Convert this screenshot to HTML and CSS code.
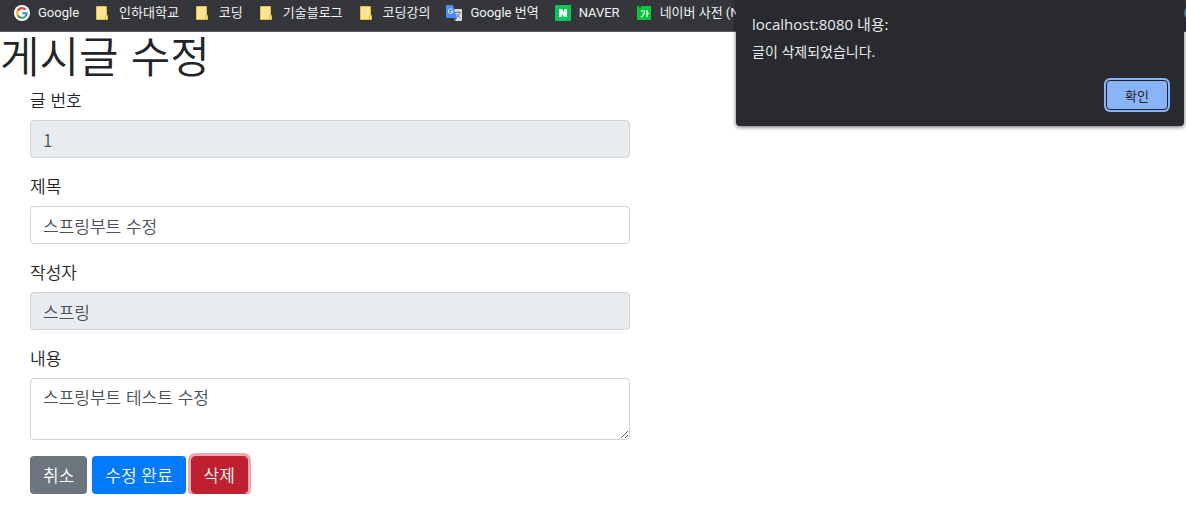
FILE: index.html
```html
<!DOCTYPE html>
<html lang="ko">
<head>
    <meta charset="UTF-8">
    <meta name="viewport" content="width=device-width, initial-scale=1.0">
    <title>게시글 수정</title>
    <link rel="stylesheet" href="styles.css">
</head>
<body>

<nav class="bookmarks">
    <a href="#" class="bookmark">
        <svg class="icon" viewBox="0 0 16 16">
            <circle cx="8" cy="8" r="8" fill="#fff"/>
            <g fill="none" stroke-width="2.1">
                <path d="M11.5 4.6A4.8 4.8 0 0 0 3.7 5.8" stroke="#ea4335"/>
                <path d="M3.7 5.8A4.8 4.8 0 0 0 3.7 10.2" stroke="#fbbc05"/>
                <path d="M3.7 10.2A4.8 4.8 0 0 0 11 11.7" stroke="#34a853"/>
                <path d="M11 11.7A4.8 4.8 0 0 0 12.7 8.2H8.2" stroke="#4285f4"/>
            </g>
        </svg>
        <span>Google</span>
    </a>
    <a href="#" class="bookmark">
        <svg class="icon" viewBox="0 0 16 16"><path d="M1.5 1.500h10v9h1v4h-11z" fill="#ffe694" stroke="#e8bd3c"/><path d="M10.500 14v-3.500h1" fill="none" stroke="#e8bd3c"/></svg>
        <span>인하대학교</span>
    </a>
    <a href="#" class="bookmark">
        <svg class="icon" viewBox="0 0 16 16"><path d="M1.5 1.500h10v9h1v4h-11z" fill="#ffe694" stroke="#e8bd3c"/><path d="M10.500 14v-3.500h1" fill="none" stroke="#e8bd3c"/></svg>
        <span>코딩</span>
    </a>
    <a href="#" class="bookmark">
        <svg class="icon" viewBox="0 0 16 16"><path d="M1.5 1.500h10v9h1v4h-11z" fill="#ffe694" stroke="#e8bd3c"/><path d="M10.500 14v-3.500h1" fill="none" stroke="#e8bd3c"/></svg>
        <span>기술블로그</span>
    </a>
    <a href="#" class="bookmark">
        <svg class="icon" viewBox="0 0 16 16"><path d="M1.5 1.500h10v9h1v4h-11z" fill="#ffe694" stroke="#e8bd3c"/><path d="M10.500 14v-3.500h1" fill="none" stroke="#e8bd3c"/></svg>
        <span>코딩강의</span>
    </a>
    <a href="#" class="bookmark">
        <svg class="icon" viewBox="0 0 16 16">
            <path d="M6 4h9q1 0 1 1v10q0 1-1 1H9z" fill="#d9dbde"/>
            <path d="M9 7.500h6M12 6v1.500M14 7.500q-1 4-4.500 5.500M10.500 9q1.500 3 4 4" fill="none" stroke="#6f8791"/>
            <path d="M1 0h6l4 13H1q-1 0-1-1V1q0-1 1-1z" fill="#4c8bf5"/>
            <path d="M8 13h3l-2 3z" fill="#3367d6"/>
            <path d="M6.400 4.800A2.300 2.300 0 1 0 6.900 6.500H4.800" fill="none" stroke="#fff"/>
        </svg>
        <span>Google 번역</span>
    </a>
    <a href="#" class="bookmark">
        <svg class="icon" viewBox="0 0 16 16"><path d="M0 0h16v16H0z" fill="#06c755"/><path d="M4 4h3l2.200 3.600V4H12v8H9L6.800 8.400V12H4z" fill="#fff"/></svg>
        <span>NAVER</span>
    </a>
    <a href="#" class="bookmark">
        <svg class="icon" viewBox="0 0 16 16">
            <path d="M1 1h14v14H1z" fill="#03c83c"/>
            <path d="M3 1v3l1-1 1 1V1z" fill="#08752a"/>
            <path d="M5 6h3.500q0 4-3.500 6M11 5v7M11 8.500h2" fill="none" stroke="#fff" stroke-width="1.200"/>
        </svg>
        <span>네이버 사전 (NAVER)</span>
    </a>
    <a href="#" class="bookmark bookmark-last" aria-label="다음 북마크">
        <svg class="icon" viewBox="0 0 16 16"><circle cx="8" cy="8" r="7" fill="#fff" stroke="#4a9be0" stroke-width="2"/></svg>
    </a>
</nav>

<h1>게시글 수정</h1>

<form class="post-form">
    <div class="form-group">
        <label for="id">글 번호</label>
        <input type="text" class="form-control" id="id" value="1" readonly>
    </div>
    <div class="form-group">
        <label for="title">제목</label>
        <input type="text" class="form-control" id="title" value="스프링부트 수정">
    </div>
    <div class="form-group">
        <label for="author">작성자</label>
        <input type="text" class="form-control" id="author" value="스프링" readonly>
    </div>
    <div class="form-group">
        <label for="content">내용</label>
        <textarea class="form-control" id="content" rows="2">스프링부트 테스트 수정</textarea>
    </div>
    <div class="buttons">
        <a href="#" class="btn btn-secondary">취소</a>
        <button type="button" class="btn btn-primary">수정 완료</button>
        <button type="button" class="btn btn-danger">삭제</button>
    </div>
</form>

<div class="alert" role="alertdialog" aria-labelledby="alertTitle">
    <div class="alert-title" id="alertTitle">localhost:8080 내용:</div>
    <p class="alert-message">글이 삭제되었습니다.</p>
    <button type="button" class="alert-ok">확인</button>
</div>

</body>
</html>
```
FILE: styles.css
```css
* {
    box-sizing: border-box;
}

body {
    margin: 0;
    font-family: "Noto Sans CJK KR", sans-serif;
    font-size: 17px;
    font-weight: 350;
    line-height: 24px;
    color: #212529;
    background-color: #fff;
}

.bookmarks {
    display: flex;
    height: 32px;
    padding: 0 0 6px 14px;
    gap: 16px;
    align-items: center;
    overflow: hidden;
    background-color: #35363a;
    border-bottom: 1px solid #5b5c60;
}

.bookmark {
    display: flex;
    flex-shrink: 0;
    align-items: center;
    gap: 8px;
    font-family: Roboto, "Noto Sans CJK KR", sans-serif;
    font-size: 13px;
    font-weight: 400;
    line-height: 20px;
    white-space: nowrap;
    color: #f1f3f4;
    text-decoration: none;
}

/* only its edge fits in the bar */
.bookmark-last {
    width: 2px;
    margin-left: auto;
    overflow: hidden;
}

.icon {
    flex-shrink: 0;
    width: 16px;
    height: 16px;
}

h1 {
    margin: 0 0 12px;
    font-size: 43px;
    font-weight: 350;
    line-height: 44px;
}

.post-form {
    max-width: 660px;
    padding: 0 30px;
}

.form-group {
    margin-bottom: 16px;
}

label {
    display: block;
    margin-bottom: 8px;
}

.form-control {
    display: block;
    width: 100%;
    height: 38px;
    padding: 6px 12px;
    font: inherit;
    color: #495057;
    background-color: #fff;
    border: 1px solid #ced4da;
    border-radius: 4px;
}

.form-control[readonly] {
    background-color: #e9ecef;
}

textarea.form-control {
    height: 62px;
    resize: vertical;
}

.buttons {
    display: flex;
    gap: 5px;
}

.btn {
    padding: 6px 12px;
    font: inherit;
    color: #fff;
    text-decoration: none;
    border: 1px solid transparent;
    border-radius: 4px;
    cursor: pointer;
}

.btn-secondary {
    background-color: #6c757d;
}

.btn-primary {
    background-color: #007bff;
}

.btn-danger {
    background-color: #c01f2f;
    background-clip: padding-box;
    border-color: #bd2130;
    box-shadow: 0 0 0 3px #f1a9b0;
}

.alert {
    position: absolute;
    top: 0;
    right: 2px;
    display: flex;
    flex-direction: column;
    width: 448px;
    padding: 12px 16px 16px;
    font-family: "Open Sans", "Noto Sans CJK KR", sans-serif;
    font-weight: 400;
    color: #e8eaed;
    background-color: #292a2d;
    border-radius: 0 0 4px 4px;
    box-shadow: 0 1px 4px rgba(0, 0, 0, 0.6);
}

.alert-title {
    font-size: 15px;
}

.alert-message {
    margin: 4px 0 16px;
    font-size: 14px;
}

.alert-ok {
    align-self: flex-end;
    width: 62px;
    height: 30px;
    font-family: inherit;
    font-size: 13px;
    color: #202124;
    background-color: #8ab4f8;
    border: 1px solid #202124;
    border-radius: 4px;
    box-shadow: 0 0 0 2px #8ab4f8;
}
```
